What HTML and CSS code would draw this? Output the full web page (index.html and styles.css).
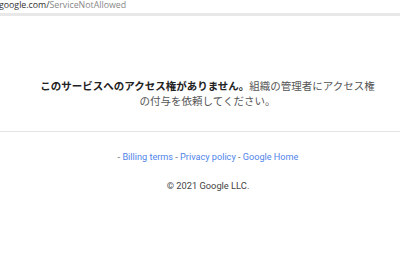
FILE: index.html
```html
<!DOCTYPE html>
<html lang="ja">
<head>
<meta charset="utf-8">
<title>ServiceNotAllowed</title>
<link rel="stylesheet" href="styles.css">
</head>
<body>
<div class="urlbar"><span class="host">google.com/</span><span class="path">ServiceNotAllowed</span></div>
<main class="message">
<p class="msg"><b>このサービスへのアクセス権がありません。</b>組織の管理者にアクセス権の付与を依頼してください。</p>
</main>
<footer class="footer">
<div class="links"><span class="sep">-</span> <a href="#">Billing terms</a> <span class="sep">-</span> <a href="#">Privacy policy</a> <span class="sep">-</span> <a href="#">Google Home</a></div>
<div class="copy">© 2021 Google LLC.</div>
</footer>
</body>
</html>
```
FILE: styles.css
```css
html, body {
  margin: 0;
  padding: 0;
  background: #fff;
}
body {
  font-family: Roboto, "Noto Sans CJK JP", sans-serif;
  width: 400px;
  height: 266px;
  overflow: hidden;
}
.urlbar {
  height: 13px;
  overflow: hidden;
  border-bottom: 3px solid #e8e8e8;
  font-family: "Open Sans", "Noto Sans", sans-serif;
  font-size: 8.8px;
  line-height: 10px;
  white-space: nowrap;
  margin-left: -1px;
}
.urlbar span {
  display: inline-block;
  margin-top: -2px;
}
.host { color: #333; }
.path { color: #888; }
.message {
  display: flex;
  justify-content: center;
  padding: 62px 0 0 15px;
  height: 53px;
  border-bottom: 1px solid #e4e4e4;
}
.msg {
  margin: 0;
  width: 340px;
  text-align: center;
  font-family: "Noto Sans CJK JP", sans-serif;
  font-size: 10.5px;
  line-height: 15px;
  color: #555;
}
.msg b {
  color: #222;
  font-weight: 700;
}
.footer {
  display: flex;
  flex-direction: column;
  align-items: center;
  padding: 18px 0 0 16px;
  gap: 15px;
}
.links {
  font-size: 9.15px;
  line-height: 14px;
  color: #666;
}
.links a {
  color: #4f84ea;
  text-decoration: none;
}
.copy {
  font-size: 9.3px;
  line-height: 14px;
  color: #444;
}
```
